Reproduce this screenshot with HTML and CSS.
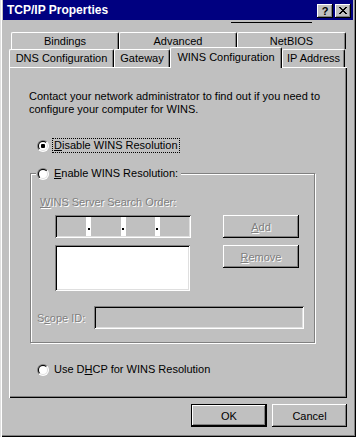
FILE: index.html
```html
<!DOCTYPE html>
<html>
  <head>
    <title>TCP/IP Properties</title>
    <link rel="stylesheet" href="styles.css">
  </head>

  <body>
    <div class="window">
      <div class="titlebar">
        <span class="title">TCP/IP Properties</span>
        <span class="cap-btn">?</span>
        <span class="cap-btn close">
          <svg width="8" height="7" viewBox="0 0 8 7" shape-rendering="crispEdges">
            <path fill="#000" d="M0 0h2v1h-2z M6 0h2v1h-2z M1 1h2v1h-2z M5 1h2v1h-2z M2 2h4v1h-4z M3 3h2v1h-2z M2 4h4v1h-4z M1 5h2v1h-2z M5 5h2v1h-2z M0 6h2v1h-2z M6 6h2v1h-2z"/>
          </svg>
        </span>
      </div>
      <div class="strip"><div class="strip-line"></div></div>

      <div class="tab-row back">
        <div class="tab t-bindings">Bindings</div>
        <div class="tab t-advanced">Advanced</div>
        <div class="tab t-netbios">NetBIOS</div>
      </div>
      <div class="tab-row front">
        <div class="tab t-dns">DNS Configuration</div>
        <div class="tab t-gateway">Gateway</div>
        <div class="tab t-wins selected">WINS Configuration</div>
        <div class="tab t-ip">IP Address</div>
      </div>

      <div class="panel">
        <p class="intro">
          Contact your network administrator to find out if you need to<br>
          configure your computer for WINS.
        </p>

        <div class="option first">
          <span class="radio on"></span>
          <span class="label focus"><u>D</u>isable WINS Resolution</span>
        </div>

        <div class="group">
          <div class="legend">
            <span class="radio"></span>
            <span class="label"><u>E</u>nable WINS Resolution:</span>
          </div>

          <div class="caption dim"><u>W</u>INS Server Search Order:</div>

          <div class="field-row">
            <div class="ipbox sunken">
              <span class="octet"></span>
              <span class="sep"><i></i></span>
              <span class="octet"></span>
              <span class="sep"><i></i></span>
              <span class="octet"></span>
              <span class="sep"><i></i></span>
              <span class="octet"></span>
            </div>
            <div class="btn add dim"><span><u>A</u>dd</span></div>
          </div>

          <div class="field-row second">
            <div class="listbox sunken"></div>
            <div class="btn remove dim"><span><u>R</u>emove</span></div>
          </div>

          <div class="scope-row">
            <span class="scope-label dim">S<u>c</u>ope ID:</span>
            <div class="edit sunken"></div>
          </div>
        </div>

        <div class="option dhcp">
          <span class="radio"></span>
          <span class="label">Use D<u>H</u>CP for WINS Resolution</span>
        </div>
      </div>

      <div class="footer">
        <div class="btn default">OK</div>
        <div class="btn cancel">Cancel</div>
      </div>
    </div>
  </body>
</html>
```

FILE: styles.css
```css
body {
  margin: 0;
  background: #c0c0c0;
  font-family: "Liberation Sans", Arial, sans-serif;
  font-size: 11px;
  color: #000;
}

.window {
  width: 356px;
  height: 437px;
  box-sizing: border-box;
  padding: 0 3px;
  background: #c0c0c0;
  box-shadow: inset 1px 0 #dfdfdf, inset 2px 0 #fff, inset -1px -1px #000,
    inset -2px -2px #808080;
}

/* title bar */

.titlebar {
  display: flex;
  align-items: center;
  height: 20px;
  padding: 0 2px 0 4px;
  background: #000080;
  color: #fff;
  font-size: 12px;
  font-weight: bold;
}

.title {
  flex: 1;
}

.cap-btn {
  display: flex;
  align-items: center;
  justify-content: center;
  width: 16px;
  height: 14px;
  margin-top: 1px;
  box-sizing: border-box;
  background: #c0c0c0;
  color: #000;
  font-size: 11px;
  box-shadow: inset -1px -1px #000, inset 1px 1px #fff, inset -2px -2px #808080;
}

.close {
  margin-left: 2px;
}

.strip {
  height: 12px;
  padding-top: 2px;
  box-sizing: border-box;
}

.strip-line {
  margin-left: 228px;
  width: 81px;
  height: 1px;
  background: #000;
}

/* tabs */

.tab-row {
  display: flex;
  align-items: flex-start;
}

.tab-row.back {
  height: 17px;
  padding-left: 8px;
}

.tab-row.front {
  height: 18px;
  padding-left: 6px;
}

.tab {
  box-sizing: border-box;
  height: 100%;
  background: #c0c0c0;
  border-top: 1px solid #fff;
  border-left: 1px solid #fff;
  border-right: 1px solid #000;
  border-radius: 2px 2px 0 0;
  box-shadow: inset -1px 0 #808080;
  text-align: center;
  white-space: nowrap;
}

.back .tab {
  line-height: 16px;
}

.front .tab {
  line-height: 17px;
}

.front .tab.selected {
  position: relative;
  z-index: 1;
  height: 21px;
  margin-top: -2px;
  line-height: 19px;
}

.t-bindings { width: 108px; }
.t-advanced { width: 118px; }
.t-netbios { width: 109px; }
.t-dns { width: 105px; }
.t-gateway { width: 56px; }
.t-wins { width: 112px; }
.t-ip { width: 63px; }

/* panel */

.panel {
  display: flex;
  flex-direction: column;
  align-items: flex-start;
  width: 338px;
  height: 331px;
  margin-left: 6px;
  box-sizing: border-box;
  box-shadow: inset 1px 1px #fff, inset -1px -1px #000, inset -2px -2px #808080;
}

.intro {
  margin: 23px 0 0 20px;
  line-height: 13px;
}

.option {
  display: flex;
  align-items: center;
  height: 15px;
}

.option.first {
  margin: 22px 0 0 28px;
}

.option.dhcp {
  margin: 19px 0 0 28px;
}

.label {
  padding: 0 1px;
  line-height: 13px;
  white-space: nowrap;
}

.focus {
  outline: 1px dotted #000;
}

.radio {
  position: relative;
  flex: none;
  width: 12px;
  height: 12px;
  margin-right: 4px;
  border-radius: 50%;
  background: linear-gradient(135deg, #808080 50%, #fff 50%);
}

.radio::before {
  content: "";
  position: absolute;
  inset: 1px;
  border-radius: 50%;
  background: linear-gradient(135deg, #000 50%, #dfdfdf 50%);
}

.radio::after {
  content: "";
  position: absolute;
  inset: 2px;
  border-radius: 50%;
  background: #fff;
}

.radio.on::after {
  background: radial-gradient(circle, #000 2px, #fff 2.5px);
}

.dim {
  color: #808080;
  text-shadow: 1px 1px 0 #fff;
}

/* group box */

.group {
  display: flex;
  flex-direction: column;
  align-items: flex-start;
  width: 285px;
  height: 170px;
  margin: 20px 0 0 21px;
  box-sizing: border-box;
  border: 1px solid #808080;
  box-shadow: inset 1px 1px #fff, 1px 1px #fff;
}

.legend {
  display: flex;
  align-items: center;
  height: 15px;
  margin: -8px 0 0 5px;
  padding: 0 2px 0 1px;
  background: #c0c0c0;
}

.caption {
  margin: 15px 0 0 9px;
  line-height: 13px;
}

.field-row {
  display: flex;
  align-items: flex-start;
  margin: 6px 0 0 24px;
}

.field-row.second {
  margin-top: 7px;
}

.sunken {
  box-sizing: border-box;
  box-shadow: inset 1px 1px #808080, inset -1px -1px #fff, inset 2px 2px #000,
    inset -2px -2px #dfdfdf;
}

.ipbox {
  display: flex;
  width: 136px;
  height: 23px;
  padding: 2px;
}

.octet {
  flex: 1;
}

.sep {
  display: flex;
  align-items: flex-end;
  justify-content: center;
  width: 5px;
  padding-bottom: 6px;
  box-sizing: border-box;
  background: #fff;
}

.sep i {
  width: 2px;
  height: 2px;
  background: #000;
}

.listbox {
  width: 135px;
  height: 46px;
  background: #fff;
}

.scope-row {
  display: flex;
  align-items: center;
  margin: 15px 0 0 6px;
}

.scope-label {
  width: 57px;
}

.edit {
  width: 210px;
  height: 23px;
}

/* buttons */

.btn {
  display: flex;
  align-items: center;
  justify-content: center;
  width: 76px;
  height: 23px;
  box-sizing: border-box;
  background: #c0c0c0;
  box-shadow: inset -1px -1px #000, inset 1px 1px #fff, inset -2px -2px #808080;
}

.btn.add {
  margin-left: 32px;
}

.btn.remove {
  margin-left: 33px;
}

.btn.default {
  box-shadow: inset 0 0 0 1px #000, inset -2px -2px #000, inset 2px 2px #fff,
    inset -3px -3px #808080;
}

.btn.cancel {
  width: 75px;
}

.footer {
  display: flex;
  justify-content: flex-end;
  gap: 5px;
  margin-top: 6px;
  padding-right: 6px;
}
```
